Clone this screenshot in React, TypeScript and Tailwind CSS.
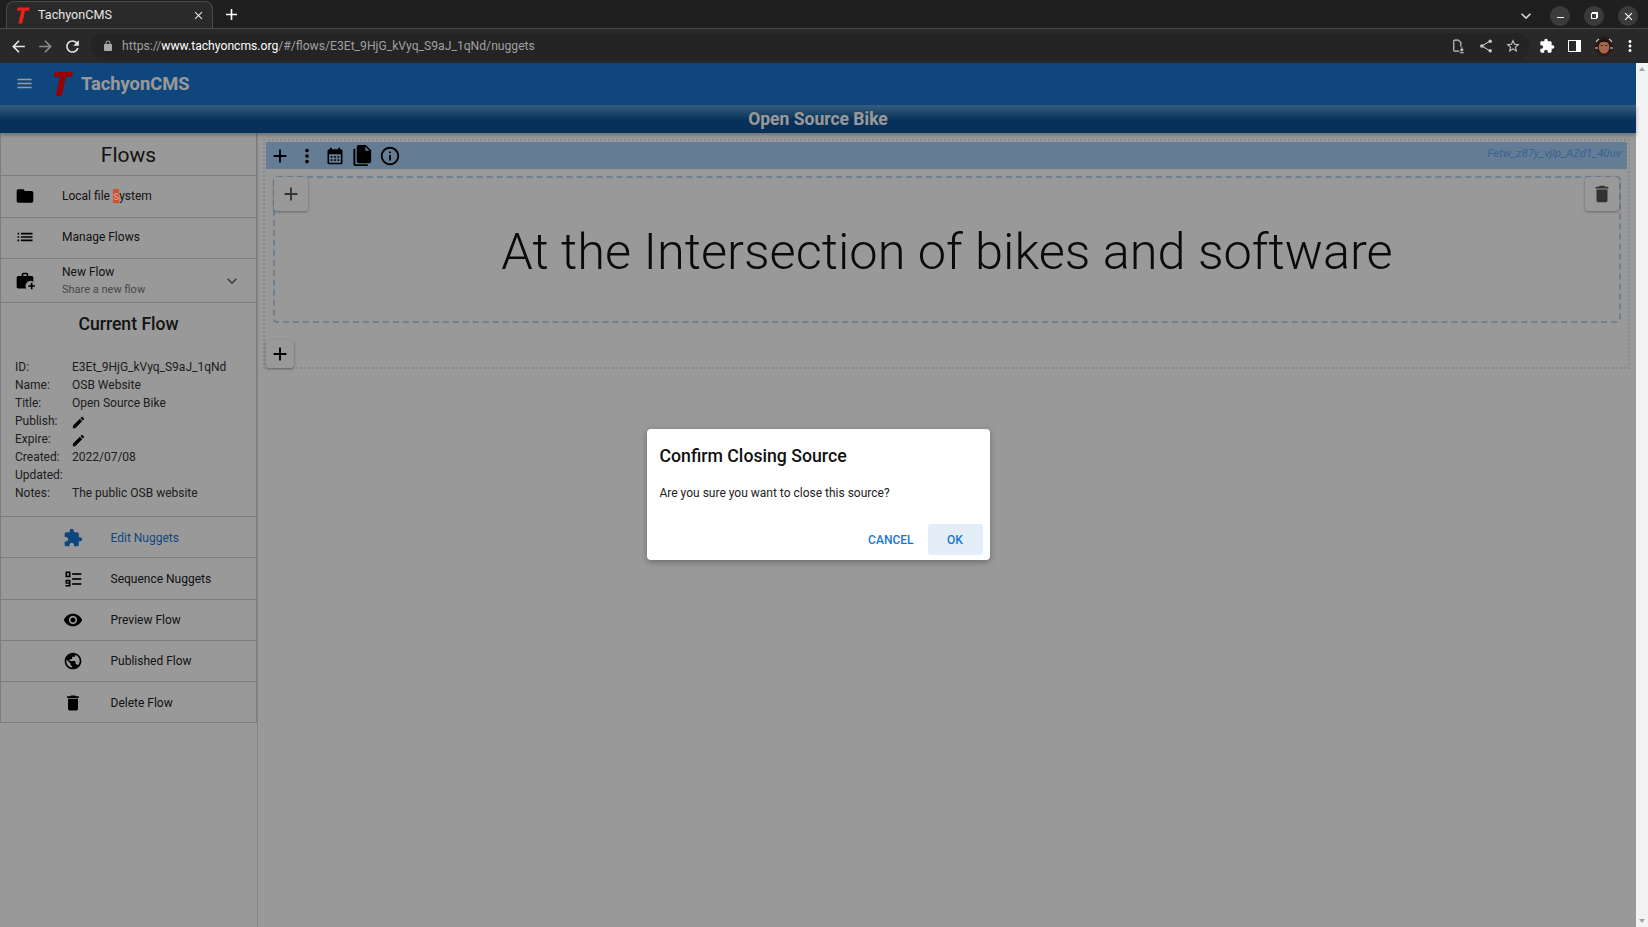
const Icon = ({ d, className = "" }: { d: string; className?: string }) => (
  <svg viewBox="0 0 24 24" fill="currentColor" className={className}>
    <path d={d} />
  </svg>
);

const icons = {
  menu: "M3 18h18v-2H3v2zm0-5h18v-2H3v2zm0-7v2h18V6H3z",
  folder: "M10 4H4c-1.1 0-1.99.9-1.99 2L2 18c0 1.1.9 2 2 2h16c1.1 0 2-.9 2-2V8c0-1.1-.9-2-2-2h-8l-2-2z",
  list: "M3 13h2v-2H3v2zm0 4h2v-2H3v2zm0-8h2V7H3v2zm4 4h14v-2H7v2zm0 4h14v-2H7v2zM7 7v2h14V7H7z",
  expand: "M16.59 8.59 12 13.17 7.41 8.59 6 10l6 6 6-6z",
  edit: "M3 17.25V21h3.75L17.81 9.94l-3.75-3.75L3 17.25zM20.71 7.04c.39-.39.39-1.02 0-1.41l-2.34-2.34c-.39-.39-1.02-.39-1.41 0l-1.83 1.83 3.75 3.75 1.83-1.83z",
  extension: "M20.5 11H19V7c0-1.1-.9-2-2-2h-4V3.5C13 2.12 11.88 1 10.5 1S8 2.12 8 3.5V5H4c-1.1 0-1.99.9-1.99 2v3.8H3.5c1.49 0 2.7 1.21 2.7 2.7s-1.21 2.7-2.7 2.7H2V20c0 1.1.9 2 2 2h3.8v-1.5c0-1.49 1.21-2.7 2.7-2.7 1.49 0 2.7 1.21 2.7 2.7V22H17c1.1 0 2-.9 2-2v-4h1.5c1.38 0 2.5-1.12 2.5-2.5S21.88 11 20.5 11z",
  eye: "M12 4.5C7 4.5 2.73 7.61 1 12c1.73 4.39 6 7.5 11 7.5s9.27-3.11 11-7.5c-1.73-4.39-6-7.5-11-7.5zM12 17c-2.76 0-5-2.24-5-5s2.24-5 5-5 5 2.24 5 5-2.24 5-5 5zm0-8c-1.66 0-3 1.34-3 3s1.34 3 3 3 3-1.34 3-3-1.34-3-3-3z",
  globe: "M12 2C6.48 2 2 6.48 2 12s4.48 10 10 10 10-4.48 10-10S17.52 2 12 2zm-1 17.93c-3.95-.49-7-3.85-7-7.93 0-.62.08-1.21.21-1.79L9 15v1c0 1.1.9 2 2 2v1.93zm6.9-2.54c-.26-.81-1-1.39-1.9-1.39h-1v-3c0-.55-.45-1-1-1H8v-2h2c.55 0 1-.45 1-1V7h2c1.1 0 2-.9 2-2v-.41c2.93 1.19 5 4.06 5 7.41 0 2.08-.8 3.97-2.1 5.39z",
  trash: "M6 19c0 1.1.9 2 2 2h8c1.1 0 2-.9 2-2V7H6v12zM19 4h-3.5l-1-1h-5l-1 1H5v2h14V4z",
  add: "M19 13h-6v6h-2v-6H5v-2h6V5h2v6h6v2z",
  more: "M12 8c1.1 0 2-.9 2-2s-.9-2-2-2-2 .9-2 2 .9 2 2 2zm0 2c-1.1 0-2 .9-2 2s.9 2 2 2 2-.9 2-2-.9-2-2-2zm0 6c-1.1 0-2 .9-2 2s.9 2 2 2 2-.9 2-2-.9-2-2-2z",
  calendar: "M19 4h-1V2h-2v2H8V2H6v2H5c-1.11 0-1.99.9-1.99 2L3 20c0 1.1.89 2 2 2h14c1.1 0 2-.9 2-2V6c0-1.1-.9-2-2-2zm0 16H5V10h14v10zM9 14H7v-2h2v2zm4 0h-2v-2h2v2zm4 0h-2v-2h2v2zm-8 4H7v-2h2v2zm4 0h-2v-2h2v2zm4 0h-2v-2h2v2z",
  info: "M11 7h2v2h-2zm0 4h2v6h-2zm1-9C6.48 2 2 6.48 2 12s4.48 10 10 10 10-4.48 10-10S17.52 2 12 2zm0 18c-4.41 0-8-3.59-8-8s3.59-8 8-8 8 3.59 8 8-3.59 8-8 8z",
  back: "M20 11H7.83l5.59-5.59L12 4l-8 8 8 8 1.41-1.41L7.83 13H20v-2z",
  forward: "M12 4l-1.41 1.41L16.17 11H4v2h12.17l-5.58 5.59L12 20l8-8z",
  reload: "M17.65 6.35C16.2 4.9 14.21 4 12 4c-4.42 0-7.99 3.58-7.99 8s3.57 8 7.99 8c3.73 0 6.84-2.55 7.73-6h-2.08c-.82 2.33-3.04 4-5.65 4-3.31 0-6-2.69-6-6s2.69-6 6-6c1.66 0 3.14.69 4.22 1.78L13 11h7V4l-2.35 2.35z",
  lock: "M18 8h-1V6c0-2.76-2.24-5-5-5S7 3.24 7 6v2H6c-1.1 0-2 .9-2 2v10c0 1.1.9 2 2 2h12c1.1 0 2-.9 2-2V10c0-1.1-.9-2-2-2zM9 6c0-1.66 1.34-3 3-3s3 1.34 3 3v2H9V6z",
  star: "M22 9.24l-7.19-.62L12 2 9.19 8.63 2 9.24l5.46 4.73L5.82 21 12 17.27 18.18 21l-1.63-7.03L22 9.24zM12 15.4l-3.76 2.27 1-4.28-3.32-2.88 4.38-.38L12 6.1l1.71 4.04 4.38.38-3.32 2.88 1 4.28L12 15.4z",
  close: "M19 6.41 17.59 5 12 10.59 6.41 5 5 6.41 10.59 12 5 17.59 6.41 19 12 13.41 17.59 19 19 17.59 13.41 12z",
};

const TLogo = ({ className = "" }: { className?: string }) => (
  <svg viewBox="0 0 24 28" fill="currentColor" className={className}>
    <path d="M4 1h20l-1.2 5.2h-6.6L11.6 27H5.2L10 6.2H2.8z" />
  </svg>
);

const NewFlowIcon = ({ className = "" }: { className?: string }) => (
  <svg viewBox="0 0 24 24" fill="currentColor" className={className}>
    <path d="M20 6h-4V4c0-1.1-.9-2-2-2h-4c-1.1 0-2 .9-2 2v2H4c-1.1 0-2 .9-2 2v11c0 1.1.9 2 2 2h9.5a6 6 0 0 1 8.5-8V8c0-1.1-.9-2-2-2zm-6 0h-4V4h4v2z" />
    <path d="M19 14h2v3h3v2h-3v3h-2v-3h-3v-2h3z" />
  </svg>
);

const SequenceIcon = ({ className = "" }: { className?: string }) => (
  <svg viewBox="0 0 24 24" fill="currentColor" className={className}>
    <path fillRule="evenodd" d="M3 3h6v7H3zm2 1.8v3.4h2V4.8z" />
    <path fillRule="evenodd" d="M3 13h6v8H3v-1.8h4v-1.4H3zm2 1.8v1.4h2v-1.4z" />
    <rect x="11" y="5" width="11" height="2" />
    <rect x="11" y="11" width="11" height="2" />
    <rect x="11" y="17" width="11" height="2" />
  </svg>
);

const CopyIcon = ({ className = "" }: { className?: string }) => (
  <svg viewBox="0 0 24 24" fill="currentColor" className={className}>
    <path d="M8 1h7.5L21 6.5V18c0 1.1-.9 2-2 2H8c-1.1 0-2-.9-2-2V3c0-1.1.9-2 2-2zm7 1.8V7h4.2z" fillRule="evenodd" />
    <path d="M2.5 5h2v16h13v2h-13c-1.1 0-2-.9-2-2z" />
  </svg>
);

const SaveDocIcon = ({ className = "" }: { className?: string }) => (
  <svg viewBox="0 0 16 18" fill="none" stroke="currentColor" strokeWidth="1.4" className={className}>
    <path d="M9 14.5H3.2c-.5 0-.9-.4-.9-.9V2.2c0-.5.4-.9.9-.9h4.6l3 3v5" />
    <path d="M12 10v4M10.3 12.5l1.7 1.7 1.7-1.7M9.5 16.5h5" />
  </svg>
);

const ShareIcon = ({ className = "" }: { className?: string }) => (
  <svg viewBox="0 0 16 16" fill="currentColor" className={className}>
    <path d="M12.8 2.2 3.4 8l9.4 5.8" fill="none" stroke="currentColor" strokeWidth="1.2" />
    <circle cx="12.8" cy="2.6" r="2" />
    <circle cx="3.2" cy="8" r="2" />
    <circle cx="12.8" cy="13.4" r="2" />
  </svg>
);

const Avatar = () => (
  <svg viewBox="0 0 20 20" className="ml-[13px] size-[20px]">
    <circle cx="10" cy="10" r="10" fill="#2a1c1a" />
    <path d="M2 6a9 9 0 0 1 3-3M15 3a9 9 0 0 1 3 3M1 12h3M16 12h3" stroke="#d8d8d8" strokeWidth="1.2" fill="none" />
    <ellipse cx="10" cy="11" rx="5.2" ry="6.6" fill="#a8654a" />
    <path d="M5 8c1-3 9-3 10 0l-1-3.5C11 2.500 8 2.500 6 4.500z" fill="#1b1110" />
    <rect x="6.800" y="9" width="2" height="1" fill="#2a1c1a" />
    <rect x="11.200" y="9" width="2" height="1" fill="#2a1c1a" />
  </svg>
);

const BrowserChrome = () => (
  <div className="shrink-0 font-['Roboto',sans-serif]">
    <div className="flex h-[28px] items-end bg-[#1f1f1f] pl-[6px]">
      <div className="flex h-[27px] w-[207px] items-center rounded-t-[8px] border-x border-t border-[#4a4a4a] bg-[#2a2a2a] pl-[8px] pr-[7px]">
        <TLogo className="h-[17px] w-[15px] text-[#e8211d]" />
        <span className="ml-[8px] flex-1 text-[12.6px] text-[#e4e4e4]">TachyonCMS</span>
        <Icon d={icons.close} className="size-[13px] text-[#e8e8e8]" />
      </div>
      <div className="mb-[1px] ml-[9px] flex h-[26px] items-center">
        <Icon d={icons.add} className="size-[19px] text-white" />
      </div>
      <div className="ml-auto mb-[2px] mr-[10px] flex items-center">
        <Icon d={icons.expand} className="mr-[14px] size-[20px] text-[#d8d8d8]" />
        <div className="mr-[14px] flex size-[20px] items-center justify-center rounded-full bg-[#3b3b3b]">
          <div className="mt-[3px] h-px w-[7px] bg-white" />
        </div>
        <div className="relative mr-[14px] flex size-[20px] items-center justify-center rounded-full bg-[#3b3b3b]">
          <div className="size-[6px] border border-white" />
          <div className="absolute left-[8px] top-[6px] h-[6px] w-[6px] border-r border-t border-white" />
        </div>
        <div className="flex size-[20px] items-center justify-center rounded-full bg-[#3b3b3b]">
          <Icon d={icons.close} className="size-[13px] text-white" />
        </div>
      </div>
    </div>
    <div className="flex h-[35px] items-center border-t border-[#4a4a4a] bg-[#292929] pl-[9px] pr-[9px]">
      <Icon d={icons.back} className="size-[19px] text-[#e8e8e8]" />
      <Icon d={icons.forward} className="ml-[8px] size-[19px] text-[#8e8e8e]" />
      <Icon d={icons.reload} className="ml-[8px] size-[19px] text-[#e8e8e8]" />
      <div className="ml-[9px] flex h-[27px] flex-1 items-center rounded-full bg-[#242424] pl-[11px] pr-[8px]">
        <Icon d={icons.lock} className="size-[12px] text-[#a8a8a8]" />
        <span className="ml-[8px] text-[12.15px] text-[#a0a0a0]">
          https://<span className="text-white">www.tachyoncms.org</span>/#/flows/E3Et_9HjG_kVyq_S9aJ_1qNd/nuggets
        </span>
        <SaveDocIcon className="ml-auto size-[15px] text-[#c8c8c8]" />
        <ShareIcon className="ml-[13px] size-[14px] text-[#c8c8c8]" />
        <Icon d={icons.star} className="ml-[12px] size-[16px] text-[#c8c8c8]" />
      </div>
      <Icon d={icons.extension} className="ml-[10px] size-[16px] text-white" />
      <div className="ml-[13px] flex h-[12px] w-[13px] border border-white">
        <div className="w-[7px]" />
        <div className="flex-1 bg-white" />
      </div>
      <Avatar />
      <Icon d={icons.more} className="ml-[7px] size-[18px] text-white" />
    </div>
  </div>
);

const NavRow = ({ label, active, icon }: { label: string; active?: boolean; icon: React.ReactNode }) => (
  <div className="flex h-[41.25px] items-center border-b border-[#d0d0d0] pl-[62px] pt-px">
    <div className={`flex w-[47.500px] ${active ? "text-[#1976d2]" : "text-black"}`}>{icon}</div>
    <span className={`text-[12px] ${active ? "text-[#1976d2]" : "text-[#222]"}`}>{label}</span>
  </div>
);

const InfoRow = ({ label, value }: { label: string; value?: React.ReactNode }) => (
  <div className="flex h-[18px] items-center text-[12px] leading-[18px] text-[#333]">
    <span className="w-[57px]">{label}</span>
    <span>{value}</span>
  </div>
);

const Pencil = () => <Icon d={icons.edit} className="mt-[2px] size-[15px] -ml-px text-black" />;

const Sidebar = () => (
  <aside className="w-[258px] shrink-0 border-r border-[#dcdcdc]">
    <div className="w-[257px] border-x border-[#d0d0d0]">
      <div className="flex h-[43px] items-center justify-center border-b border-[#d0d0d0] pt-[3px] text-[21px] text-[#222]">Flows</div>
      <div className="flex h-[41.5px] items-center border-b border-[#d0d0d0] pl-[14px]">
        <Icon d={icons.folder} className="mr-[27px] size-[20px] text-black" />
        <span className="text-[12px] text-[#222]">
          Local file <span className="relative z-20 bg-[#d2502f] text-[#e89a80]">s</span>ystem
        </span>
      </div>
      <div className="flex h-[41.5px] items-center border-b border-[#d0d0d0] pb-px pl-[14px]">
        <Icon d={icons.list} className="mr-[27px] size-[20px] text-black" />
        <span className="text-[12px] text-[#222]">Manage Flows</span>
      </div>
      <div className="flex h-[44px] items-center border-b border-[#d0d0d0] pl-[14px] pr-[14px]">
        <NewFlowIcon className="mr-[27px] size-[20px] text-black" />
        <div className="flex-1">
          <div className="text-[12px] leading-[17px] text-[#222]">New Flow</div>
          <div className="text-[11px] leading-[17px] text-[#777]">Share a new flow</div>
        </div>
        <Icon d={icons.expand} className="size-[20px] text-[#666]" />
      </div>
      <div className="flex h-[214px] flex-col border-b border-[#d0d0d0] pl-[14px]">
        <div className="mb-[12px] flex h-[43px] items-center justify-center pr-[14px] text-[17.6px] font-medium text-[#222]">Current Flow</div>
        <InfoRow label="ID:" value="E3Et_9HjG_kVyq_S9aJ_1qNd" />
        <InfoRow label="Name:" value="OSB Website" />
        <InfoRow label="Title:" value="Open Source Bike" />
        <InfoRow label="Publish:" value={<Pencil />} />
        <InfoRow label="Expire:" value={<Pencil />} />
        <InfoRow label="Created:" value="2022/07/08" />
        <InfoRow label="Updated:" />
        <InfoRow label="Notes:" value="The public OSB website" />
      </div>
      <NavRow label="Edit Nuggets" active icon={<Icon d={icons.extension} className="size-[20px]" />} />
      <NavRow label="Sequence Nuggets" icon={<SequenceIcon className="size-[20px]" />} />
      <NavRow label="Preview Flow" icon={<Icon d={icons.eye} className="size-[20px]" />} />
      <NavRow label="Published Flow" icon={<Icon d={icons.globe} className="size-[20px]" />} />
      <NavRow label="Delete Flow" icon={<Icon d={icons.trash} className="size-[20px]" />} />
    </div>
  </aside>
);

const Editor = () => (
  <main className="min-w-0 flex-1 pl-[5px] pr-[6px] pt-[6px]">
    <div className="h-[230px] border-2 border-dotted border-[#dbe6f1] p-px">
      <div className="flex h-[27px] items-center bg-[#a7cff7] pl-[3px] pr-[6px] text-black">
        <Icon d={icons.add} className="size-[22px]" />
        <Icon d={icons.more} className="ml-[5px] size-[22px]" />
        <Icon d={icons.calendar} className="ml-[7px] size-[20px]" />
        <CopyIcon className="ml-[6px] size-[23px]" />
        <Icon d={icons.info} className="ml-[5px] size-[22px]" />
        <span className="mb-[3px] ml-auto text-[11.4px] italic text-[#5fa5f5]">Fetw_z87y_vjlp_AZd1_40uv</span>
      </div>
      <div className="relative ml-[7px] mr-[6px] mt-[7px] flex h-[147px] items-center justify-center rounded-[4px] border-2 border-dashed border-[#b9d7f2]">
        <h1 className="mt-[6px] text-[50.5px] font-light leading-none text-[#111]">At the Intersection of bikes and software</h1>
        <button className="absolute -left-px -top-px flex size-[34px] items-center justify-center rounded-[3px] bg-white text-[#555] shadow-[0_1px_3px_rgba(0,0,0,0.35)]">
          <Icon d={icons.add} className="size-[22px]" />
        </button>
        <button className="absolute -top-px right-0 flex size-[34px] items-center justify-center rounded-[3px] bg-white text-[#555] shadow-[0_1px_3px_rgba(0,0,0,0.35)]">
          <Icon d={icons.trash} className="size-[22px]" />
        </button>
      </div>
      <button className="ml-0 mt-[17px] flex size-[28px] items-center justify-center rounded-[3px] bg-white text-black shadow-[0_1px_3px_rgba(0,0,0,0.35)]">
        <Icon d={icons.add} className="size-[22px]" />
      </button>
    </div>
  </main>
);

const ConfirmDialog = () => (
  <div className="absolute inset-0 z-10 flex items-center justify-center bg-black/40 pb-[1px]">
    <div className="h-[131px] w-[343px] rounded-[4px] bg-white px-[13px] pt-[16px] shadow-[0_2px_6px_rgba(0,0,0,0.3)]">
      <div className="text-[17.7px] font-medium leading-[22px] text-[#111]">Confirm Closing Source</div>
      <p className="mt-[17px] text-[12px] leading-[18px] text-[#222]">Are you sure you want to close this source?</p>
      <div className="-mr-[6px] mt-[22px] flex items-center justify-end">
        <button className="mr-[14px] text-[12px] font-medium text-[#1976d2]">CANCEL</button>
        <button className="h-[31px] w-[55px] rounded-[3px] bg-[#e3eef8] text-[12px] font-medium text-[#1976d2]">OK</button>
      </div>
    </div>
  </div>
);

export default function App() {
  return (
    <div className="flex h-[927px] flex-col overflow-hidden bg-white font-['Roboto',sans-serif]">
      <BrowserChrome />
      <div className="flex min-h-0 flex-1">
        <div className="relative flex min-w-0 flex-1 flex-col">
          <header className="h-[42px] shrink-0 bg-[#1976d2] pl-[15px]">
            <div className="flex h-full items-center pb-px">
              <Icon d={icons.menu} className="size-[19px] text-white" />
              <TLogo className="ml-[17px] h-[26px] w-[22px] text-[#ff0000]" />
              <span className="ml-[8px] text-[18.3px] font-bold text-white">TachyonCMS</span>
            </div>
          </header>
          <div className="relative z-[1] flex h-[28px] shrink-0 items-center justify-center bg-[linear-gradient(#5a9ad2,#0d5396_55%)] text-[17.5px] font-bold text-white shadow-[0_2px_4px_rgba(0,0,0,0.3)]">
            Open Source Bike
          </div>
          <div className="flex min-h-0 flex-1">
            <Sidebar />
            <Editor />
          </div>
          <ConfirmDialog />
        </div>
        <div className="flex w-[12px] shrink-0 flex-col items-center justify-between bg-[#f3f3f3] py-[4px] text-[#a3a3a3]">
          <div className="h-0 w-0 border-x-[3px] border-b-[4px] border-x-transparent border-b-[#a3a3a3]" />
          <div className="h-0 w-0 border-x-[3px] border-t-[4px] border-x-transparent border-t-[#a3a3a3]" />
        </div>
      </div>
    </div>
  );
}
